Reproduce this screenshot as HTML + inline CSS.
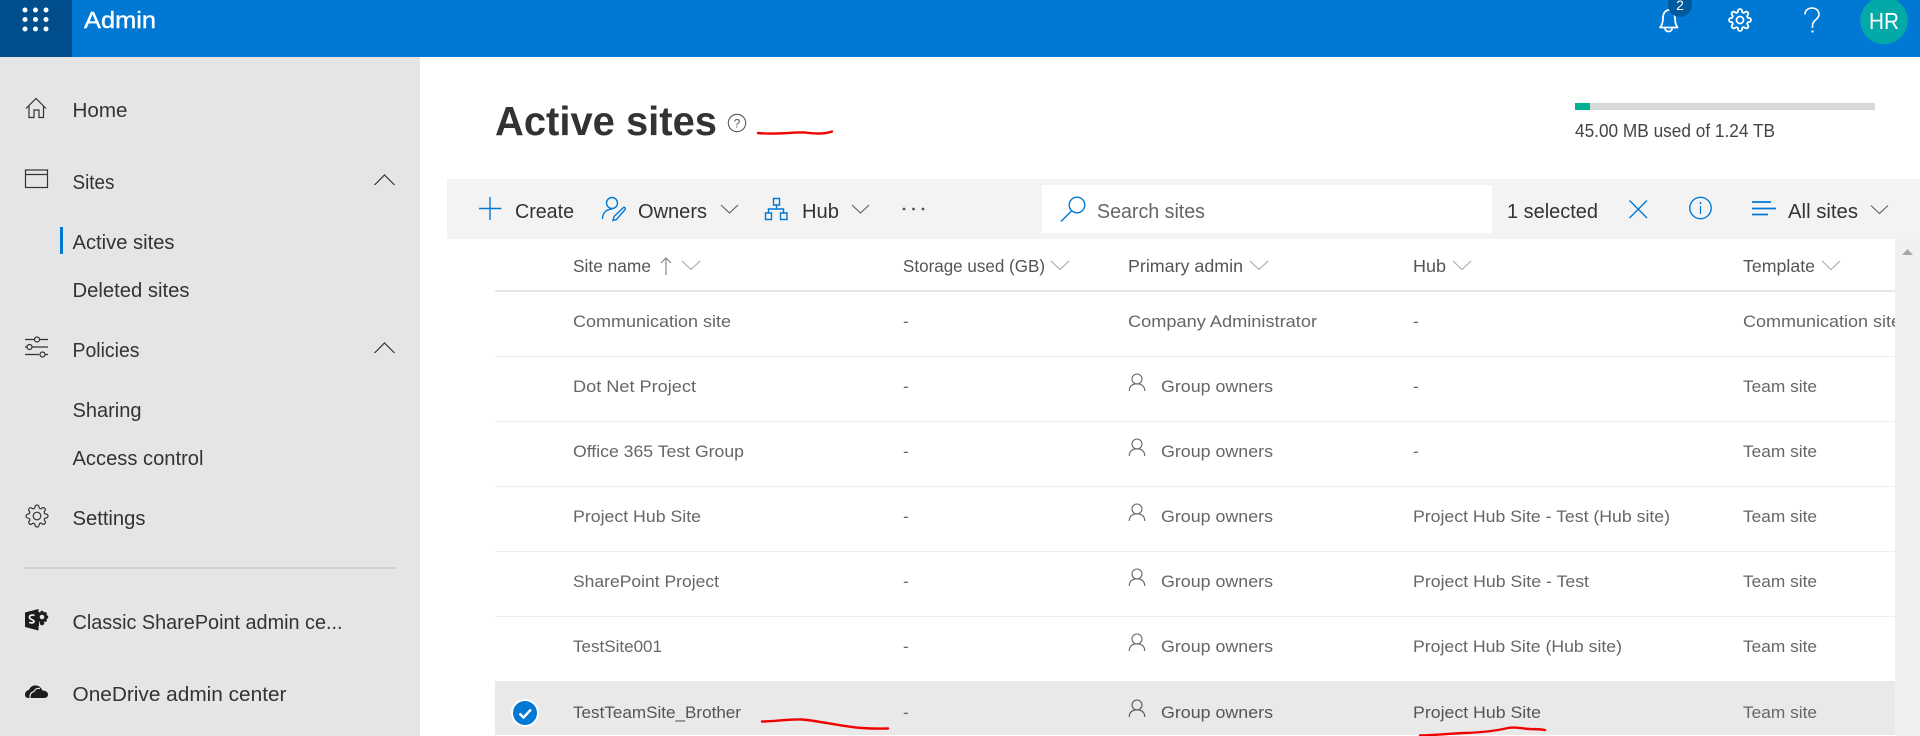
<!DOCTYPE html>
<html><head><meta charset="utf-8"><title>Active sites</title>
<style>
html,body{margin:0;padding:0;background:#fff;width:1920px;height:736px;overflow:hidden}
svg{display:block}
text{font-family:"Liberation Sans",sans-serif}
.s{font-size:20.5px;fill:#333}
.t{font-size:20px;fill:#333}
.h{font-size:17.5px;fill:#555}
.c{font-size:17px;fill:#666}
.i{fill:none;stroke:#0078d4;stroke-width:1.4}
.k{fill:none;stroke:#333;stroke-width:1.2}
.v{fill:none;stroke:#605e5c;stroke-width:1.1}
.w{fill:none;stroke:#a9a9a9;stroke-width:1.1}
.r{fill:none;stroke:#f00000;stroke-width:2.4;stroke-linecap:round;stroke-linejoin:round}
</style></head><body>
<svg xmlns="http://www.w3.org/2000/svg" width="1920" height="736" viewBox="0 0 1920 736">
<defs>
<path id="gear" d="M19.4 15a1.65 1.65 0 0 0 .33 1.82l.06.06a2 2 0 0 1 0 2.83 2 2 0 0 1-2.83 0l-.06-.06a1.65 1.65 0 0 0-1.82-.33 1.65 1.65 0 0 0-1 1.51V21a2 2 0 0 1-2 2 2 2 0 0 1-2-2v-.09A1.65 1.65 0 0 0 9 19.4a1.65 1.65 0 0 0-1.82.33l-.06.06a2 2 0 0 1-2.83 0 2 2 0 0 1 0-2.83l.06-.06a1.65 1.65 0 0 0 .33-1.82 1.65 1.65 0 0 0-1.51-1H3a2 2 0 0 1-2-2 2 2 0 0 1 2-2h.09A1.65 1.65 0 0 0 4.6 9a1.65 1.65 0 0 0-.33-1.82l-.06-.06a2 2 0 0 1 0-2.83 2 2 0 0 1 2.83 0l.06.06a1.65 1.65 0 0 0 1.82.33H9a1.65 1.65 0 0 0 1-1.51V3a2 2 0 0 1 2-2 2 2 0 0 1 2 2v.09a1.65 1.65 0 0 0 1 1.51 1.65 1.65 0 0 0 1.82-.33l.06-.06a2 2 0 0 1 2.83 0 2 2 0 0 1 0 2.83l-.06.06a1.65 1.65 0 0 0-.33 1.82V9a1.65 1.65 0 0 0 1.51 1H21a2 2 0 0 1 2 2 2 2 0 0 1-2 2h-.09a1.65 1.65 0 0 0-1.51 1z"/>
<path id="per" d="M-5 0a5 5 0 1 0 10 0a5 5 0 1 0-10 0zM-7.8 12c0-4.500 3-7.200 7.800-7.200s7.800 2.700 7.800 7.200"/>
<clipPath id="cl"><rect x="1700" y="295" width="195" height="60"/></clipPath>
</defs>

<!-- top bar -->
<rect width="1920" height="57" fill="#0078d4"/>
<rect width="72" height="57" fill="#004e8c"/>
<g fill="#fff"><circle cx="25" cy="10" r="2.5"/><circle cx="35.500" cy="10" r="2.5"/><circle cx="46" cy="10" r="2.5"/><circle cx="25" cy="19.500" r="2.5"/><circle cx="35.500" cy="19.500" r="2.5"/><circle cx="46" cy="19.500" r="2.5"/><circle cx="25" cy="29" r="2.5"/><circle cx="35.500" cy="29" r="2.5"/><circle cx="46" cy="29" r="2.5"/></g>
<text x="84" y="28" font-size="23" fill="#fff" stroke="#fff" stroke-width=".4" textLength="72" lengthAdjust="spacingAndGlyphs">Admin</text>
<path d="M1660 27.500c2-2 3-5 3-10c0-4 2.500-7.500 6-7.500s5.500 3.500 6 7.500c0 5 1 8 2.500 10zM1665 28.500a3.500 3 0 0 0 7 0" fill="none" stroke="#fff" stroke-width="1.800" stroke-linejoin="round"/>
<circle cx="1680" cy="5" r="12" fill="#005a9e"/>
<text x="1680" y="10" font-size="14" fill="#fff" text-anchor="middle">2</text>
<g transform="translate(1728 8)" fill="none" stroke="#fff" stroke-width="1.800"><use href="#gear"/><circle cx="12" cy="12" r="3.500"/></g>
<path d="M1805 14.500c0-4 3-6.500 7-6.500s7 2.500 7 6.500c0 5-6.500 5.500-6.500 11v2.500" fill="none" stroke="#fff" stroke-width="1.600"/><circle cx="1812.500" cy="31.500" r="1.100" fill="#fff"/>
<circle cx="1884" cy="20.500" r="23.700" fill="#03a9a6"/>
<text x="1869" y="29" font-size="23" fill="#fff" textLength="30" lengthAdjust="spacingAndGlyphs">HR</text>

<!-- sidebar -->
<rect y="57" width="420" height="679" fill="#e5e5e5"/>
<path class="k" d="M26 108.500L36 98.500L46 108.500M29 106V117.500H34V110H39V117.500H43.500V106"/>
<text class="s" x="72.500" y="117" textLength="55" lengthAdjust="spacingAndGlyphs">Home</text>
<rect class="k" x="25.500" y="170" width="22" height="17.500" stroke-width="1.400"/><path class="k" d="M25.500 174.500H47.500"/>
<text class="s" x="72.500" y="189" textLength="42" lengthAdjust="spacingAndGlyphs">Sites</text>
<path class="k" d="M374.500 185L384.500 175L394.500 185"/>
<rect x="60" y="227" width="3" height="27" fill="#0078d4"/>
<text class="s" x="72.500" y="249" textLength="102" lengthAdjust="spacingAndGlyphs">Active sites</text>
<text class="s" x="72.500" y="297" textLength="117" lengthAdjust="spacingAndGlyphs">Deleted sites</text>
<path class="k" d="M25 339.500H34M40 339.500H48M25 347H26.500M32.500 347H48M25 354.500H39M45 354.500H48"/>
<circle class="k" cx="37" cy="339.500" r="2.500"/><circle class="k" cx="29.500" cy="347" r="2.500"/><circle class="k" cx="42.500" cy="354.500" r="2.500"/>
<text class="s" x="72.500" y="357" textLength="67" lengthAdjust="spacingAndGlyphs">Policies</text>
<path class="k" d="M374.500 353L384.500 343L394.500 353"/>
<text class="s" x="72.500" y="417" textLength="69" lengthAdjust="spacingAndGlyphs">Sharing</text>
<text class="s" x="72.500" y="465" textLength="131" lengthAdjust="spacingAndGlyphs">Access control</text>
<g transform="translate(25 504)" class="k" stroke-width="1"><use href="#gear"/><circle cx="12" cy="12" r="3.800"/></g>
<text class="s" x="72.500" y="525" textLength="73" lengthAdjust="spacingAndGlyphs">Settings</text>
<rect x="24" y="567" width="372" height="2" fill="#d2d2d2"/>
<path d="M25 612.500L38.500 609V630.500L25 627z" fill="#1c1c1c"/>
<path d="M34.500 615.500c-2-1-5-.5-5 1.800c0 2.800 4.500 2 4.500 4.200c0 1.500-2.500 1.800-4.800.8" fill="none" stroke="#fff" stroke-width="1.600"/>
<g transform="translate(36 611) scale(.5)" fill="#1c1c1c" stroke="#1c1c1c" stroke-width="3"><use href="#gear"/></g>
<circle cx="42" cy="617" r="2.300" fill="#e5e5e5"/><circle cx="42" cy="623" r="2.300" fill="#1c1c1c"/><path d="M38.500 614V626" stroke="#1c1c1c" stroke-width="1"/>
<text class="s" x="72.500" y="629" textLength="270" lengthAdjust="spacingAndGlyphs">Classic SharePoint admin ce...</text>
<path d="M25 695c0-3 2-5 4-5c1-3 4-5 7-4.500c3 0 5 2 6.500 5c3 0 5.500 1.500 5.500 4c0 2-1.500 3.500-3.500 3.500H29c-2 0-4-1-4-3z" fill="#1c1c1c"/>
<path d="M30 698c-.5-3 1-6 4-6.500c1-2.500 3-3.500 6-3" fill="none" stroke="#e5e5e5" stroke-width="1.200"/>
<text class="s" x="72.500" y="701" textLength="214" lengthAdjust="spacingAndGlyphs">OneDrive admin center</text>

<!-- title -->
<text x="495" y="135" font-size="41" font-weight="700" fill="#333" textLength="222" lengthAdjust="spacingAndGlyphs">Active sites</text>
<circle cx="737" cy="123" r="8.700" fill="none" stroke="#555" stroke-width="1.100"/>
<text x="737" y="127.500" font-size="12" fill="#555" text-anchor="middle">?</text>
<path class="r" d="M758 133C775 135 790 132 805 132.500C815 134 825 134 832 131.500"/>

<!-- storage -->
<rect x="1575" y="103" width="300" height="7" fill="#d8d8d8"/>
<rect x="1575" y="103" width="15" height="7" fill="#00b294"/>
<text x="1575" y="137" font-size="18" fill="#444" textLength="200" lengthAdjust="spacingAndGlyphs">45.00 MB used of 1.24 TB</text>

<!-- toolbar -->
<rect x="447" y="179" width="1473" height="60" fill="#f3f3f3"/>
<rect x="1042" y="185" width="450" height="48" fill="#fff"/>
<path class="i" d="M479 208.500H501.500M490 197V220"/>
<text class="t" x="515" y="218" textLength="59" lengthAdjust="spacingAndGlyphs">Create</text>
<circle class="i" cx="612" cy="203" r="5.500"/>
<path class="i" d="M602.500 219c0-6 3.500-9.500 9.500-10M613 220.500l1-4L623.500 207.500c1-.8 2.500 1 1.500 2.200L616.500 219.500z"/>
<text class="t" x="638" y="218" textLength="69" lengthAdjust="spacingAndGlyphs">Owners</text>
<path class="v" d="M721 205L729.500 213L738 205"/>
<path class="i" d="M773.500 198.500H779.500V205H773.500zM765.500 213H771.500V219.500H765.500zM780.500 213H787V219.500H780.500zM776.500 205V209M768.500 213V209H783.500V213"/>
<text class="t" x="802" y="218" textLength="37" lengthAdjust="spacingAndGlyphs">Hub</text>
<path class="v" d="M852 205L860.500 213L869 205"/>
<g fill="#555"><circle cx="904" cy="209" r="1.400"/><circle cx="913.500" cy="209" r="1.400"/><circle cx="923" cy="209" r="1.400"/></g>
<circle class="i" cx="1077" cy="205" r="7.800"/><path class="i" d="M1071.500 211L1061 221.500"/>
<text x="1097" y="218" font-size="20" fill="#666" textLength="108" lengthAdjust="spacingAndGlyphs">Search sites</text>
<text class="t" x="1507" y="218" textLength="91" lengthAdjust="spacingAndGlyphs">1 selected</text>
<path class="i" d="M1629.500 200.500L1647 218M1647 200.500L1629.500 218"/>
<circle class="i" cx="1700.500" cy="208" r="10.700"/>
<path d="M1700.500 206V214" stroke="#0078d4" stroke-width="1.200"/><circle cx="1700.500" cy="203" r="1" fill="#0078d4"/>
<path class="i" style="stroke-width:1.700" d="M1752 202H1771M1752 208.500H1776M1752 214.500H1768"/>
<text class="t" x="1788" y="218" textLength="70" lengthAdjust="spacingAndGlyphs">All sites</text>
<path class="v" d="M1871 205.500L1879.500 213.500L1888 205.500"/>

<!-- scrollbar -->
<rect x="1895" y="239" width="25" height="497" fill="#f0f0f0"/>
<path d="M1902 255L1907.500 249L1913 255z" fill="#a6a6a6"/>

<!-- table header -->
<text class="h" x="573" y="272" textLength="78" lengthAdjust="spacingAndGlyphs">Site name</text>
<path d="M666 275V258M661 263L666 258L671 263" fill="none" stroke="#888" stroke-width="1.200"/>
<path class="w" d="M682 261L691 269.500L700 261"/>
<text class="h" x="903" y="272" textLength="142" lengthAdjust="spacingAndGlyphs">Storage used (GB)</text>
<path class="w" d="M1051 261L1060 269.500L1069 261"/>
<text class="h" x="1128" y="272" textLength="115" lengthAdjust="spacingAndGlyphs">Primary admin</text>
<path class="w" d="M1250 261L1259 269.500L1268 261"/>
<text class="h" x="1413" y="272" textLength="33" lengthAdjust="spacingAndGlyphs">Hub</text>
<path class="w" d="M1453 261L1462 269.500L1471 261"/>
<text class="h" x="1743" y="272" textLength="72" lengthAdjust="spacingAndGlyphs">Template</text>
<path class="w" d="M1822 261L1831 269.500L1840 261"/>
<rect x="495" y="290" width="1400" height="2" fill="#e6e6e6"/>

<!-- row dividers -->
<g fill="#eeeeee"><rect x="495" y="356" width="1400" height="1"/><rect x="495" y="421" width="1400" height="1"/><rect x="495" y="486" width="1400" height="1"/><rect x="495" y="551" width="1400" height="1"/><rect x="495" y="616" width="1400" height="1"/></g>
<rect x="495" y="681" width="1400" height="54" fill="#e9e9e9"/>

<!-- rows -->
<text class="c" x="573" y="327" textLength="158" lengthAdjust="spacingAndGlyphs">Communication site</text>
<text class="c" x="903" y="327">-</text>
<text class="c" x="1128" y="327" textLength="189" lengthAdjust="spacingAndGlyphs">Company Administrator</text>
<text class="c" x="1413" y="327">-</text>
<text class="c" x="1743" y="327" textLength="158" lengthAdjust="spacingAndGlyphs" clip-path="url(#cl)">Communication site</text>

<text class="c" x="573" y="392" textLength="123" lengthAdjust="spacingAndGlyphs">Dot Net Project</text>
<text class="c" x="903" y="392">-</text>
<use href="#per" transform="translate(1137 379)" fill="none" stroke="#666" stroke-width="1.100"/>
<text class="c" x="1161" y="392" textLength="112" lengthAdjust="spacingAndGlyphs">Group owners</text>
<text class="c" x="1413" y="392">-</text>
<text class="c" x="1743" y="392" textLength="74" lengthAdjust="spacingAndGlyphs">Team site</text>

<text class="c" x="573" y="457" textLength="171" lengthAdjust="spacingAndGlyphs">Office 365 Test Group</text>
<text class="c" x="903" y="457">-</text>
<use href="#per" transform="translate(1137 444)" fill="none" stroke="#666" stroke-width="1.100"/>
<text class="c" x="1161" y="457" textLength="112" lengthAdjust="spacingAndGlyphs">Group owners</text>
<text class="c" x="1413" y="457">-</text>
<text class="c" x="1743" y="457" textLength="74" lengthAdjust="spacingAndGlyphs">Team site</text>

<text class="c" x="573" y="522" textLength="128" lengthAdjust="spacingAndGlyphs">Project Hub Site</text>
<text class="c" x="903" y="522">-</text>
<use href="#per" transform="translate(1137 509)" fill="none" stroke="#666" stroke-width="1.100"/>
<text class="c" x="1161" y="522" textLength="112" lengthAdjust="spacingAndGlyphs">Group owners</text>
<text class="c" x="1413" y="522" textLength="257" lengthAdjust="spacingAndGlyphs">Project Hub Site - Test (Hub site)</text>
<text class="c" x="1743" y="522" textLength="74" lengthAdjust="spacingAndGlyphs">Team site</text>

<text class="c" x="573" y="587" textLength="146" lengthAdjust="spacingAndGlyphs">SharePoint Project</text>
<text class="c" x="903" y="587">-</text>
<use href="#per" transform="translate(1137 574)" fill="none" stroke="#666" stroke-width="1.100"/>
<text class="c" x="1161" y="587" textLength="112" lengthAdjust="spacingAndGlyphs">Group owners</text>
<text class="c" x="1413" y="587" textLength="176" lengthAdjust="spacingAndGlyphs">Project Hub Site - Test</text>
<text class="c" x="1743" y="587" textLength="74" lengthAdjust="spacingAndGlyphs">Team site</text>

<text class="c" x="573" y="652" textLength="89" lengthAdjust="spacingAndGlyphs">TestSite001</text>
<text class="c" x="903" y="652">-</text>
<use href="#per" transform="translate(1137 639)" fill="none" stroke="#666" stroke-width="1.100"/>
<text class="c" x="1161" y="652" textLength="112" lengthAdjust="spacingAndGlyphs">Group owners</text>
<text class="c" x="1413" y="652" textLength="209" lengthAdjust="spacingAndGlyphs">Project Hub Site (Hub site)</text>
<text class="c" x="1743" y="652" textLength="74" lengthAdjust="spacingAndGlyphs">Team site</text>

<circle cx="525" cy="713" r="14" fill="#fff"/><circle cx="525" cy="713" r="12" fill="#0078d4"/>
<path d="M519.500 713.500L523.500 717.500L531 709.500" fill="none" stroke="#fff" stroke-width="2.400"/>
<text class="c" x="573" y="718" style="fill:#555" textLength="168" lengthAdjust="spacingAndGlyphs">TestTeamSite_Brother</text>
<text class="c" x="903" y="718">-</text>
<use href="#per" transform="translate(1137 705)" fill="none" stroke="#555" stroke-width="1.100"/>
<text class="c" x="1161" y="718" style="fill:#555" textLength="112" lengthAdjust="spacingAndGlyphs">Group owners</text>
<text class="c" x="1413" y="718" style="fill:#555" textLength="128" lengthAdjust="spacingAndGlyphs">Project Hub Site</text>
<text class="c" x="1743" y="718" textLength="74" lengthAdjust="spacingAndGlyphs">Team site</text>
<path class="r" d="M762 721.500C775 721.500 788 719 802 719.500C820 721 845 727 862 728C872 728.700 880 728.700 888 728.500"/>
<path class="r" d="M1420 735.500C1440 735 1450 733.500 1465 733C1480 732.500 1495 731 1508 728C1515 726.500 1520 728.500 1530 729C1536 729 1540 729 1545 730"/>
</svg>
</body></html>
